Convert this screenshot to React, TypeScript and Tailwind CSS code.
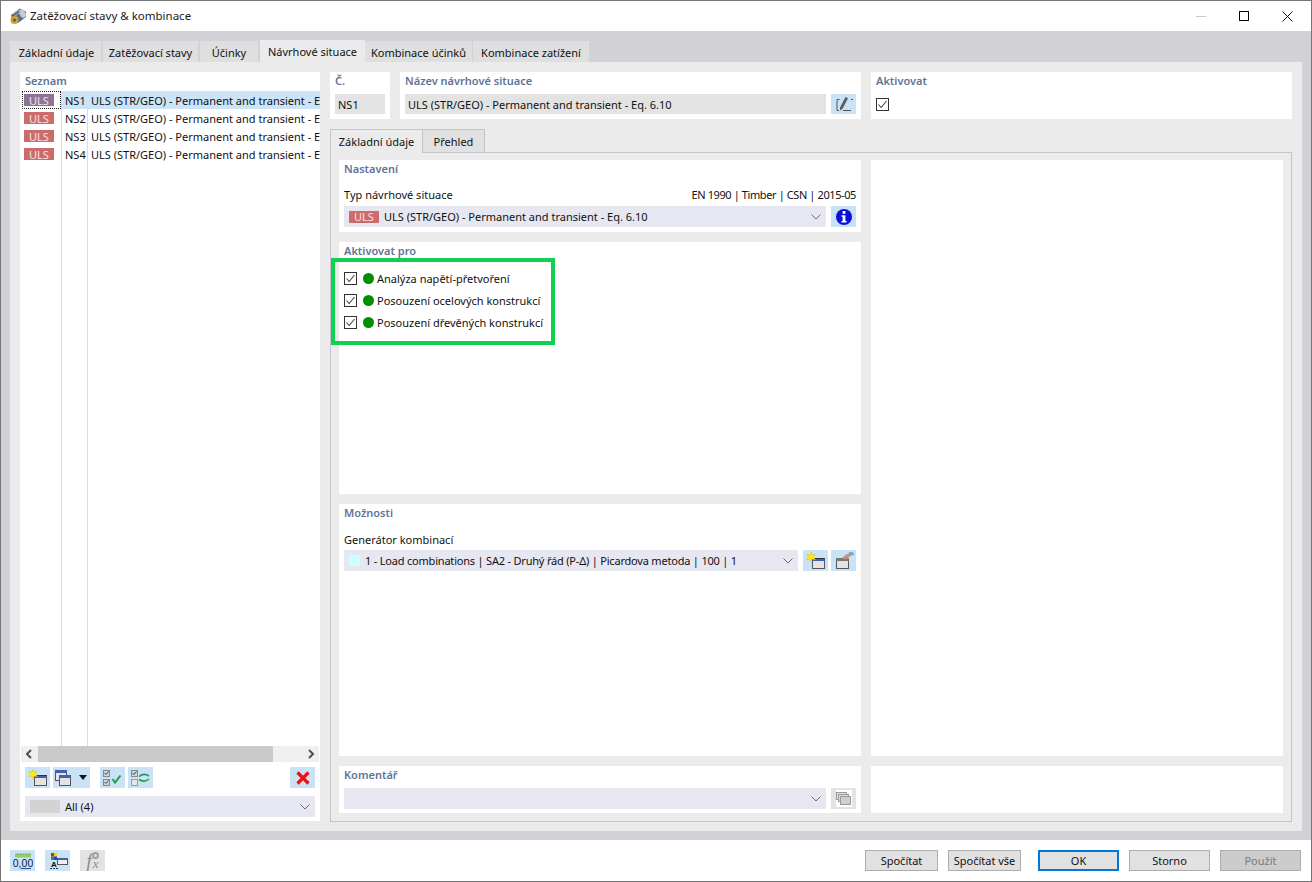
import React from "react";

const Panel = ({ title, className = "", children }: { title?: string; className?: string; children?: React.ReactNode }) => (
  <div className={"bg-white relative " + className}>
    {title && <div className="absolute left-[5px] top-[1px] text-[#5f7397] font-semibold leading-[16px]">{title}</div>}
    {children}
  </div>
);

const Chevron = () => (
  <svg width="10" height="6" viewBox="0 0 10 6" className="shrink-0"><path d="M0.5 0.5 L5 5 L9.5 0.5" fill="none" stroke="#6a6a6a" strokeWidth="1" /></svg>
);

const Badge = ({ muted }: { muted?: boolean }) => (
  <span className={"inline-flex items-center justify-center w-[30px] h-[12px] text-white/80 text-[11px] leading-none " + (muted ? "bg-[#8f7396]" : "bg-[#cc6b6b]")}>ULS</span>
);

const Check = () => (
  <span className="w-[13px] h-[13px] border border-[#333] bg-white inline-flex items-center justify-center shrink-0">
    <svg width="11" height="11" viewBox="0 0 11 11"><path d="M1.5 5.5 L4.2 8.5 L9.5 2" fill="none" stroke="#444" strokeWidth="1.1" /></svg>
  </span>
);

const IconBtn = ({ className = "", children }: { className?: string; children?: React.ReactNode }) => (
  <div className={"h-[21px] w-[25px] bg-[#c9e2f5] flex items-center justify-center shrink-0 " + className}>{children}</div>
);

const NewIcon = () => (
  <svg width="20" height="18" viewBox="0 0 20 18">
    <rect x="6.5" y="6.5" width="12" height="10" fill="#e4e4e4" stroke="#555" />
    <rect x="6" y="6" width="13" height="3" fill="#3f5fb5" />
    <rect x="6" y="6" width="13" height="1" fill="#333" />
    <path d="M5 0 L6.2 3 L9.5 2.2 L7.5 5 L9.5 7.8 L6.2 7 L5 10 L3.8 7 L0.5 7.8 L2.5 5 L0.5 2.2 L3.8 3 Z" fill="#ffe818" stroke="#d8b800" strokeWidth=".4" />
  </svg>
);

const CopyIcon = () => (
  <svg width="16" height="16" viewBox="0 0 16 16">
    <rect x="0.5" y="0.5" width="11" height="10" fill="#e4e4e4" stroke="#555" />
    <rect x="0" y="0" width="12" height="3" fill="#3f5fb5" />
    <rect x="4.5" y="5.5" width="11" height="10" fill="#e4e4e4" stroke="#555" />
    <rect x="4" y="5" width="12" height="3" fill="#3f5fb5" />
  </svg>
);

const Field = ({ className = "", children }: { className?: string; children?: React.ReactNode }) => (
  <div className={"h-[21px] bg-[#e6e7f1] flex items-center " + className}>{children}</div>
);

const FootBtn = ({ label, className = "" }: { label: string; className?: string }) => (
  <div className={"h-[21px] flex items-center justify-center border border-[#adadad] bg-[#e1e1e1] " + className}>{label}</div>
);

const TopTab = ({ label, w, active }: { label: string; w: string; active?: boolean }) => (
  <div className={"flex items-center justify-center " + w + (active ? " h-[22px] bg-[#ebebeb] pt-[1px]" : " h-[21px] bg-[#dfdfdf] pt-[2px]")}>{label}</div>
);

const rows = ["NS1", "NS2", "NS3", "NS4"];
const NAME = "ULS (STR/GEO) - Permanent and transient - Eq. 6.10";

export default function App() {
  return (
    <div className="w-[1312px] h-[882px] flex flex-col bg-white border border-[#767676] overflow-hidden text-[11px] leading-[15px] text-[#111] font-['Noto_Sans',sans-serif]">
      {/* title bar */}
      <div className="h-[30px] flex items-center shrink-0 pl-[8px]">
        <svg width="18" height="18" viewBox="0 0 18 18" className="mr-[3px]">
          <path d="M2 8 L11 1.5 L17 4.5 L17 10 L9 16 L3 14 Z" fill="#5d6f84" />
          <ellipse cx="13.5" cy="6.5" rx="3" ry="4.5" fill="#c4ccd6" transform="rotate(-25 13.5 6.5)" />
          <path d="M4 7 L10 2.6 M6 9 L12 4.6" stroke="#aab5c2" strokeWidth="1" />
          <circle cx="5.5" cy="13" r="4" fill="#c9a23a" />
          <circle cx="5.5" cy="13" r="1.5" fill="#6b5a1c" />
        </svg>
        <span className="text-[11.5px] text-[#1a1a1a] pb-[2px]">Zatěžovací stavy &amp; kombinace</span>
        <div className="ml-auto flex items-center pr-[18px] gap-[33px]">
          <div className="w-[10px] h-px bg-[#c8c8c8]" />
          <div className="w-[10px] h-[10px] border border-black" />
          <svg width="11" height="11" viewBox="0 0 11 11"><path d="M0.5 0.5 L10.5 10.5 M10.5 0.5 L0.5 10.5" stroke="#111" strokeWidth="1" /></svg>
        </div>
      </div>

      {/* dialog band */}
      <div className="h-[809px] shrink-0 bg-[#d1d1d6] px-[9px] pt-[9px] flex flex-col">
        <div className="flex items-end h-[22px] shrink-0">
          <TopTab label="Základní údaje" w="w-[91px] pl-[2px]" />
          <TopTab label="Zatěžovací stavy" w="w-[95px] ml-[2px]" />
          <TopTab label="Účinky" w="w-[58px] ml-[2px]" />
          <TopTab label="Návrhové situace" w="w-[105px] ml-[2px]" active />
          <TopTab label="Kombinace účinků" w="w-[107px]" />
          <TopTab label="Kombinace zatížení" w="w-[116px] ml-[1px]" />
        </div>

        <div className="w-[1292px] h-[769px] bg-[#ebebeb] p-[10px] flex gap-[10px] shrink-0">
          {/* left list */}
          <Panel title="Seznam" className="w-[300px] h-[749px] shrink-0 flex flex-col">
            <div className="h-[19px] shrink-0" />
            <div className="flex-1 relative overflow-hidden">
              <div className="absolute left-[41px] top-0 bottom-0 w-px bg-[#dcdcdc]" />
              <div className="absolute left-[67px] top-0 bottom-0 w-px bg-[#dcdcdc]" />
              {rows.map((r, i) => (
                <div key={r} className="h-[18px] flex items-center relative">
                  <div className="w-[42px] pl-[4px] h-full flex items-center shrink-0">
                    <Badge muted={i === 0} />
                  </div>
                  {i === 0 && <div className="absolute left-[2px] top-0 w-[39px] h-[18px] border border-dotted border-[#222]" />}
                  <div className={"flex-1 h-full flex items-center whitespace-nowrap overflow-hidden " + (i === 0 ? "bg-[#cce4f7]" : "")}>
                    <span className="w-[26px] pl-[3px] shrink-0">{r}</span>
                    <span className="pl-[3px]">{NAME}</span>
                  </div>
                </div>
              ))}
            </div>
            <div className="h-[16px] mx-[1px] shrink-0 bg-[#efefef] flex items-center justify-between">
              <svg width="17" height="16" viewBox="0 0 17 16"><path d="M10 4 L6 8 L10 12" fill="none" stroke="#505050" strokeWidth="2" /></svg>
              <div className="w-[235px] h-full bg-[#c9c9c9]" />
              <div className="w-[29px]" />
              <svg width="17" height="16" viewBox="0 0 17 16"><path d="M7 4 L11 8 L7 12" fill="none" stroke="#505050" strokeWidth="2" /></svg>
            </div>
            <div className="h-[21px] mt-[5px] mx-[5px] flex items-center shrink-0">
              <IconBtn><NewIcon /></IconBtn>
              <IconBtn className="w-[37px] ml-[3px] !justify-start pl-[2px] gap-[8px]">
                <CopyIcon />
                <svg width="8" height="5" viewBox="0 0 8 5"><path d="M0 0 H8 L4 5 Z" fill="#111" /></svg>
              </IconBtn>
              <IconBtn className="ml-[10px]">
                <svg width="20" height="18" viewBox="0 0 20 18">
                  <rect x="0.5" y="1.5" width="6" height="6" fill="#d4d4d4" stroke="#888" />
                  <rect x="0.5" y="10.5" width="6" height="6" fill="#d4d4d4" stroke="#888" />
                  <path d="M1.5 4 L3 5.5 L5.5 2.5 M1.5 13 L3 14.5 L5.5 11.5" fill="none" stroke="#444" />
                  <path d="M9.5 10 L12 13.5 L17.5 6.5" fill="none" stroke="#14a24a" strokeWidth="2" />
                </svg>
              </IconBtn>
              <IconBtn className="ml-[3px]">
                <svg width="20" height="18" viewBox="0 0 20 18">
                  <rect x="0.5" y="1.5" width="6" height="6" fill="#d4d4d4" stroke="#888" />
                  <rect x="0.5" y="10.5" width="6" height="6" fill="#e8e8e8" stroke="#999" />
                  <path d="M1.5 4 L3 5.5 L5.5 2.5" fill="none" stroke="#444" />
                  <path d="M8 7.5 C11 5 15 5 18 7 M18 10 C15 12.5 11 12.5 8 10.5" fill="none" stroke="#2a9a55" strokeWidth="1.6" />
                </svg>
              </IconBtn>
              <IconBtn className="ml-auto">
                <svg width="14" height="14" viewBox="0 0 14 14"><path d="M1.5 1.5 L12.5 12.5 M12.5 1.5 L1.5 12.5" stroke="#f01010" strokeWidth="3.2" /></svg>
              </IconBtn>
            </div>
            <Field className="mx-[5px] mt-[8px] mb-[4px] pl-[5px] pr-[5px] shrink-0">
              <div className="w-[30px] h-[13px] bg-[#d3d3d3] mr-[5px]" />
              <span className="flex-1">All (4)</span>
              <Chevron />
            </Field>
          </Panel>

          {/* right side */}
          <div className="w-[962px] flex flex-col">
            <div className="flex gap-[10px] h-[47px] shrink-0">
              <Panel title="Č." className="w-[60px] pt-[22px] pl-[5px]">
                <div className="w-[50px] h-[20px] bg-[#e3e3e3] flex items-center pl-[3px]">NS1</div>
              </Panel>
              <Panel title="Název návrhové situace" className="w-[461px] pt-[22px] pl-[5px] flex gap-[5px] items-start">
                <div className="w-[421px] h-[20px] bg-[#e3e3e3] flex items-center pl-[3px]">{NAME}</div>
                <div className="w-[25px] h-[20px] bg-[#c9e2f5] flex items-center justify-center">
                  <svg width="19" height="17" viewBox="0 0 19 17">
                    <path d="M5.5 3.5 H3 V14.5 H5 M9 14.5 H17 M17 3.5 H19" fill="none" stroke="#555" strokeWidth="1" />
                    <path d="M6 11.5 L11.5 1 L14 2.3 L8.5 12.8 L6 14.5 Z" fill="#5a5a5a" />
                  </svg>
                </div>
              </Panel>
              <Panel title="Aktivovat" className="w-[421px] pt-[26px] pl-[5px]">
                <Check />
              </Panel>
            </div>

            {/* inner tabs */}
            <div className="flex mt-[10px] h-[24px] shrink-0 relative z-10">
              <div className="w-[93px] h-[24px] bg-[#ebebeb] border-t border-x border-[#c4c4cc] flex items-center justify-center">Základní údaje</div>
              <div className="w-[62px] h-[23px] bg-[#e1e1e1] border-t border-r border-[#c4c4cc] flex items-center justify-center">Přehled</div>
            </div>
            <div className="h-[670px] -mt-px border border-[#c4c4cc] pl-[8px] pt-[7px] flex gap-[10px] shrink-0">
              <div className="w-[522px] flex flex-col gap-[10px] shrink-0">
                <Panel title="Nastavení" className="h-[72px] shrink-0 px-[5px] pt-[27px]">
                  <div className="flex justify-between h-[18px] pb-[4px] items-center">
                    <span>Typ návrhové situace</span>
                    <span className="tracking-[-0.4px]">EN 1990 | Timber | CSN | 2015-05</span>
                  </div>
                  <div className="flex gap-[5px] mt-[1px]">
                    <Field className="flex-1 pl-[5px] pr-[5px]">
                      <Badge />
                      <span className="ml-[5px] flex-1">{NAME}</span>
                      <Chevron />
                    </Field>
                    <IconBtn>
                      <svg width="18" height="18" viewBox="0 0 18 18">
                        <circle cx="9" cy="9" r="8" fill="#0a10d8" />
                        <rect x="7.6" y="3" width="2.8" height="2.8" fill="#fff" />
                        <path d="M6.5 7.2 H10.4 V13 H11.6 V14.6 H6.5 V13 H7.6 V8.8 H6.5 Z" fill="#fff" />
                      </svg>
                    </IconBtn>
                  </div>
                </Panel>

                <Panel title="Aktivovat pro" className="h-[252px] shrink-0 pl-[5px] pt-[25px]">
                  {["Analýza napětí-přetvoření", "Posouzení ocelových konstrukcí", "Posouzení dřevěných konstrukcí"].map((t) => (
                    <div key={t} className="h-[22px] flex items-center">
                      <Check />
                      <span className="w-[11px] h-[11px] rounded-full bg-[#008f00] ml-[6px] mr-[3px] shrink-0" />
                      <span>{t}</span>
                    </div>
                  ))}
                  <div className="absolute left-[-8px] top-[16px] w-[224px] h-[87px] border-[4px] border-[#10d050]" />
                </Panel>

                <Panel title="Možnosti" className="h-[252px] shrink-0 px-[5px] pt-[25px]">
                  <div className="h-[21px] flex items-center">Generátor kombinací</div>
                  <div className="flex">
                    <Field className="w-[454px] pl-[5px] pr-[5px]">
                      <div className="w-[11px] h-[11px] bg-[#ccffff] mr-[5px]" />
                      <span className="flex-1 tracking-[-0.2px]">1 - Load combinations | SA2 - Druhý řád (P-Δ) | Picardova metoda | 100 | 1</span>
                      <Chevron />
                    </Field>
                    <IconBtn className="ml-[5px]"><NewIcon /></IconBtn>
                    <IconBtn className="ml-[3px]">
                      <svg width="20" height="18" viewBox="0 0 20 18">
                        <rect x="2.5" y="6.5" width="12" height="10" fill="#e4e4e4" stroke="#555" />
                        <rect x="2" y="6" width="13" height="3" fill="#777" />
                        <path d="M8 6 L12 2.5 L16 1 L19 3 L15 5 L12 7.5 Z" fill="#b89a86" />
                        <path d="M15 1 L19 1 L19 3" fill="none" stroke="#4a78b8" strokeWidth="1" />
                      </svg>
                    </IconBtn>
                  </div>
                </Panel>

                <Panel title="Komentář" className="h-[47px] shrink-0 px-[5px] pt-[22px] flex gap-[5px]">
                  <Field className="flex-1 justify-end pr-[5px]"><Chevron /></Field>
                  <div className="w-[25px] h-[21px] bg-[#e3e3e3] flex items-center justify-center">
                    <div className="w-[16px] h-[17px] bg-white flex items-center justify-center">
                      <svg width="15" height="13" viewBox="0 0 15 13">
                        <rect x="0.5" y="0.5" width="10" height="7" fill="#e4e4e4" stroke="#9a9a9a" />
                        <rect x="2.5" y="2.5" width="10" height="7" fill="#dcdcdc" stroke="#9a9a9a" />
                        <rect x="4.5" y="4.5" width="10" height="8" fill="#cfcfcf" stroke="#9a9a9a" />
                      </svg>
                    </div>
                  </div>
                </Panel>
              </div>

              <div className="w-[412px] flex flex-col gap-[10px] shrink-0">
                <div className="h-[596px] bg-white" />
                <div className="h-[47px] bg-white" />
              </div>
            </div>
          </div>
        </div>
      </div>

      {/* footer */}
      <div className="flex-1 flex items-start pt-[10px] pl-[9px] pr-[10px] relative">
        <IconBtn>
          <svg width="20" height="18" viewBox="0 0 20 18">
            <rect x="2" y="1.5" width="16" height="4" fill="#8fcf6f" />
            <path d="M4.5 1.5 V3 M7.5 1.5 V3 M10.5 1.5 V3 M13.5 1.5 V3 M16.5 1.5 V3" stroke="#5f9f4a" strokeWidth=".7" />
            <text x="10" y="15" textAnchor="middle" fontSize="10.5" fontWeight="400" fill="#111a40" fontFamily="'Liberation Sans', sans-serif">0,00</text>
            <path d="M8 16.5 H18" stroke="#2a4a9a" strokeWidth="1" />
          </svg>
        </IconBtn>
        <IconBtn className="ml-[10px]">
          <svg width="20" height="18" viewBox="0 0 20 18">
            <rect x="3" y="1" width="3" height="3.5" fill="#e02020" />
            <rect x="6" y="1" width="3" height="3.5" fill="#e8d820" />
            <rect x="3" y="4.5" width="3" height="3.5" fill="#20a020" />
            <rect x="6" y="4.5" width="3" height="3.5" fill="#2040d0" />
            <text x="6" y="15" textAnchor="middle" fontSize="8" fontWeight="700" fill="#111" fontFamily="'Liberation Sans', sans-serif">A</text>
            <path d="M2 16.5 H10" stroke="#333" strokeWidth="1" strokeDasharray="2 1" />
            <rect x="9.5" y="6.5" width="10" height="6" fill="#eee" stroke="#555" />
            <rect x="9" y="6" width="11" height="2" fill="#4a5f9a" />
          </svg>
        </IconBtn>
        <div className="ml-[10px] h-[21px] w-[25px] bg-[#e3e3e3] flex items-center justify-center relative">
          <span className="font-['Liberation_Serif',serif] italic text-[19px] leading-none text-[#8a8a8a]">f</span>
          <span className="font-['Liberation_Serif',serif] italic text-[13px] leading-none text-[#8a8a8a] mt-[5px] ml-[1px]">x</span>
          <span className="absolute left-[12px] top-[2px] w-[7px] h-[7px] rounded-full border-2 border-[#a0a0a0]" />
        </div>
        <div className="ml-auto flex">
          <FootBtn label="Spočítat" className="w-[73px]" />
          <FootBtn label="Spočítat vše" className="w-[73px] ml-[10px]" />
          <FootBtn label="OK" className="w-[81px] ml-[17px] !border-2 !border-[#0078d7]" />
          <FootBtn label="Storno" className="w-[81px] ml-[10px]" />
          <FootBtn label="Použít" className="w-[81px] ml-[10px] !bg-[#cccccc] text-[#7a7a7a]" />
        </div>
      </div>
    </div>
  );
}
